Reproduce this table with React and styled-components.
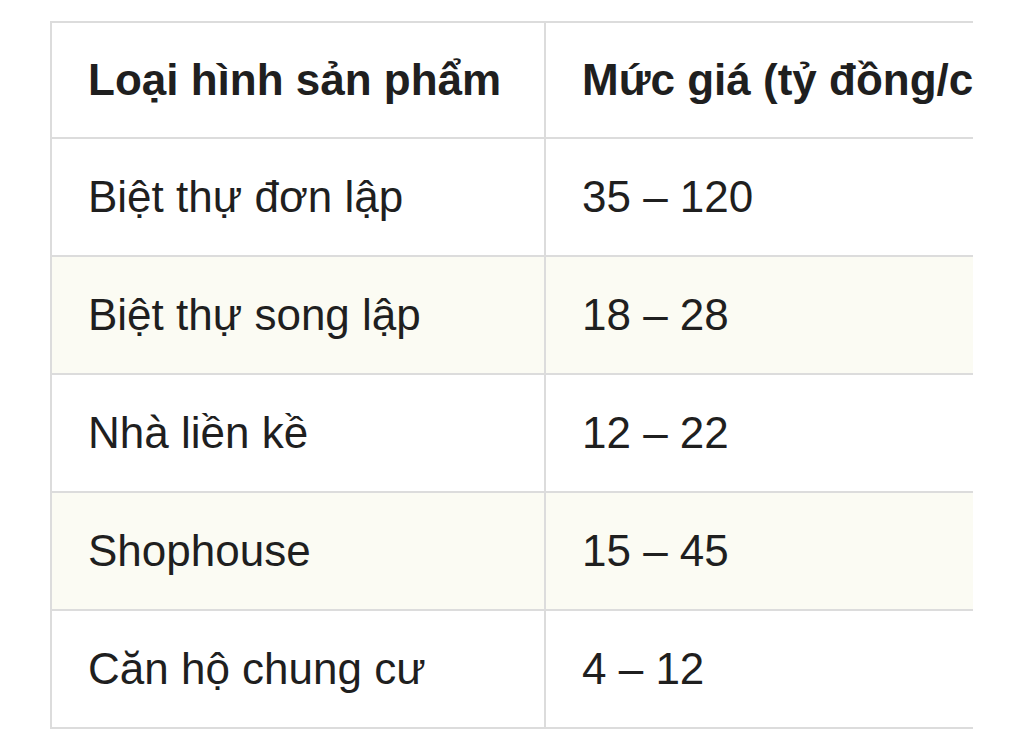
import React from "react";
import styled, { createGlobalStyle } from "styled-components";

const GlobalStyle = createGlobalStyle`
  body {
    margin: 0;
    background: #ffffff;
    font-family: "Liberation Sans", Arial, sans-serif;
    color: #1f1f1f;
  }
`;

const Page = styled.div`
  padding: 21px 0 0 50px;
`;

const Clip = styled.div`
  width: 923px;
  overflow: hidden;
`;

const Table = styled.table`
  width: 1000px;
  table-layout: fixed;
  border-collapse: collapse;
  font-size: 44px;
  line-height: 1.15;
`;

const Cell = styled.td`
  height: ${(p) => (p.$head ? 114 : 116)}px;
  padding: 0 36px;
  border: 2px solid #dcdcdc;
  vertical-align: middle;
  white-space: nowrap;
  text-align: left;
  font-weight: ${(p) => (p.$head ? 700 : 400)};
  background: ${(p) => (p.$striped ? "#fbfbf3" : "#ffffff")};
`;

const rows = [
  ["Biệt thự đơn lập", "35 – 120"],
  ["Biệt thự song lập", "18 – 28"],
  ["Nhà liền kề", "12 – 22"],
  ["Shophouse", "15 – 45"],
  ["Căn hộ chung cư", "4 – 12"],
];

export default function App() {
  return (
    <Page>
      <GlobalStyle />
      <Clip>
        <Table>
          <colgroup>
            <col style={{ width: 494 }} />
            <col />
          </colgroup>
          <thead>
            <tr>
              <Cell as="th" $head>Loại hình sản phẩm</Cell>
              <Cell as="th" $head>Mức giá (tỷ đồng/căn)</Cell>
            </tr>
          </thead>
          <tbody>
            {rows.map((r, i) => (
              <tr key={i}>
                <Cell $striped={i % 2 === 1}>{r[0]}</Cell>
                <Cell $striped={i % 2 === 1}>{r[1]}</Cell>
              </tr>
            ))}
          </tbody>
        </Table>
      </Clip>
    </Page>
  );
}
